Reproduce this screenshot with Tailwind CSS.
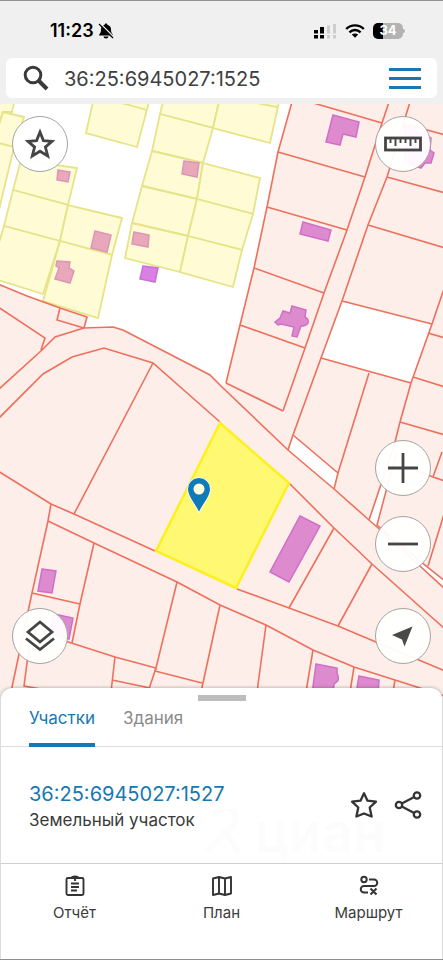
<!DOCTYPE html>
<html lang="ru">
<head>
    <meta charset="UTF-8">
    <meta name="viewport" content="width=device-width, initial-scale=1.0">
    <title>Карта участков</title>
    <script src="https://cdn.jsdelivr.net/npm/@tailwindcss/browser@4"></script>
</head>
<body class="bg-white font-['Inter',sans-serif] text-[#3b3b3b]">
    <div class="flex flex-col min-h-screen border-y border-[#939393]">

        <!-- Status bar and search -->
        <header class="bg-[#f0f0f0] px-1.5 pb-1.5">
            <div class="flex items-center justify-between h-[57px] pl-11 pr-8 pt-0.5 text-black">
                <div class="flex items-center gap-1">
                    <span class="text-lg font-semibold">11:23</span>
                    <svg class="w-4 h-4" viewBox="0 0 16 16" fill="currentColor">
                        <path d="M8 0.500c.8 0 1.300.5 1.400 1.200C11.800 2.300 13 4 13 6.200c0 3 .6 4 1.800 5.300v1H1.200v-1C2.400 10.200 3 9.200 3 6.200c0-2.200 1.200-3.900 3.600-4.500C6.700 1 7.200.5 8 .5zM5.500 13.500h5c-.2 1.300-1 2-2.500 2s-2.300-.7-2.500-2z"/>
                        <path d="M2.300 0.500L16 14.200" stroke="#f0f0f0" stroke-width="1.400"/>
                        <path d="M1 1L15 15" stroke="currentColor" stroke-width="1.200"/>
                    </svg>
                </div>
                <div class="flex items-center gap-2">
                    <svg class="w-6 h-4" viewBox="0 0 24 16">
                        <path d="M1 7h4v3.500H1zM7 4h4v6.500H7zM1 12h4v3.500H1zM7 12h4v3.500H7z"/>
                        <path d="M14 2.500h3v8h-3zM20 1h3v9.500h-3zM14 12h3v3.500h-3zM20 12h3v3.500h-3z" fill="#cdcdcd"/>
                    </svg>
                    <svg class="w-5 h-4" viewBox="0 0 20 16" fill="none" stroke="currentColor" stroke-width="2.400">
                        <path d="M1.200 6C6 1.200 14 1.200 18.800 6M4.400 9.300c3.200-3 8-3 11.200 0"/>
                        <path d="M10 14.800L6.800 11.600c1.800-1.500 4.600-1.500 6.400 0z" fill="currentColor" stroke="none"/>
                    </svg>
                    <div class="flex items-center">
                        <span class="flex items-center justify-center w-[30px] h-4 rounded-[5px] bg-linear-to-r from-black from-33% to-[#b3b3b3] to-33% text-white text-[13px] font-bold">34</span>
                        <span class="w-0.5 h-1 rounded-r bg-[#b3b3b3]"></span>
                    </div>
                </div>
            </div>
            <form class="flex items-center h-10 rounded-md bg-white pl-4 pr-4">
                <label for="search" aria-label="Поиск">
                    <svg class="w-7 h-7" viewBox="0 0 28 28" fill="none" stroke="#3a3a3a">
                        <circle cx="11" cy="11" r="7.800" stroke-width="3"/>
                        <path d="M16.500 16.500L25 25" stroke-width="4"/>
                    </svg>
                </label>
                <input id="search" type="text" value="36:25:6945027:1525" class="flex-1 min-w-0 ml-3.5 pt-0.5 text-xl text-[#404040] outline-none">
                <button type="button" aria-label="Меню" class="flex flex-col gap-1.5 w-8">
                    <span class="h-[3px] w-full bg-[#1778b2]"></span>
                    <span class="h-[3px] w-full bg-[#1778b2]"></span>
                    <span class="h-[3px] w-full bg-[#1778b2]"></span>
                </button>
            </form>
        </header>

        <!-- Map -->
        <main class="relative flex-1 overflow-hidden">
            <svg class="absolute inset-0 w-full h-full" viewBox="0 104 443 596" preserveAspectRatio="xMidYMin slice">
                <!-- garden plots -->
                <g fill="#fefbd5" stroke="#e6e388" stroke-width="1.800">
                    <path d="M-2 103H14L12 112L3 112L-2 126z"/>
                    <path d="M3 112L24 117L14 147L-2 143V128z"/>
                    <path d="M-2 143L14 147L-2 214z"/>
                    <path d="M21 160L77 168L68 205L13 190z"/>
                    <path d="M13 190L68 205L60 241L4 226z"/>
                    <path d="M68 205L122 218L112 255L60 241z"/>
                    <path d="M4 226L60 241L43 294L-2 280V246z"/>
                    <path d="M60 241L112 255L98 318L43 301z"/>
                    <path d="M93 102H149L137 147L86 133zM118 102L147 110"/>
                    <path d="M163 102H219L213 128L160 114z"/>
                    <path d="M160 114L213 128L203 163L152 151z"/>
                    <path d="M219 102H279L270 143L213 128zM252 102L277 107"/>
                    <path d="M152 151L203 163L197 199L142 186z"/>
                    <path d="M142 186L197 199L188 236L132 223z"/>
                    <path d="M132 223L188 236L180 272L125 258z"/>
                    <path d="M203 163L260 178L253 214L197 199z"/>
                    <path d="M197 199L253 214L242 250L188 236z"/>
                    <path d="M188 236L242 250L233 287L180 272z"/>
                </g>
                <g fill="#e8a8ba" stroke="#de94b8" stroke-width="1.500">
                    <path d="M58 170L70 172L68 182L57 180z"/>
                    <path d="M184 161L199 163L197 177L182 174z"/>
                    <path d="M134 232L149 235L148 247L132 244z"/>
                    <path d="M95 231L111 235L107 252L91 248z"/>
                    <path d="M57 261L70 262L69 268L74 271L70 283L55 279L59 268L56 266z"/>
                </g>
                <path d="M143 266L158 268L155 282L140 279z" fill="#da80e2" stroke="#c96fdb" stroke-width="1.500"/>

                <!-- built-up land with unassigned gaps -->
                <path fill="#fdeeea" d="M-2 284L27 296L43 302L60 308L87 317L84 328L113 327L123 330L210 375L222 387L226 383L240 325L254 268L267 207L278 152L292 102H445V702H-2z"/>
                <g fill="#fff">
                    <path d="M342 301L432 324L411 383L321 358z"/>
                    <path d="M293 435L338 473L334 489L288 450z"/>
                    <path d="M394 446L369 520L377 526L390 482z"/>
                    <path d="M377 524L421 562L445 581V589L418 567z"/>
                </g>
                <g fill="none" stroke="#ee705c" stroke-width="1.600">
                    <path d="M-2 284L27 296L60 308L87 317L84 328L113 327L123 330L210 375L222 387L288 450L334 489L369 520L377 527L445 589"/>
                    <path d="M60 308L57 320L84 328M226 383L240 325L254 268L267 207L278 152L292 102"/>
                    <path d="M-2 390L42 350L55 337L84 328M-2 307L45 338L41 350"/>
                    <path d="M-2 419L43 374L72 357L104 348L153 363L220 422M289 483L334 528L372 564L445 629"/>
                    <path d="M153 363L74 514M-2 471L51 504L74 514L155 551M237 589L289 608L338 626L376 642L445 671"/>
                    <path d="M334 528L289 608M372 564L338 626"/>
                    <path d="M310 102L382 123M278 152L365 177M267 207L347 230M254 268L324 293M240 325L305 348M226 383L283 411"/>
                    <path d="M389 102L382 123L365 177L347 230L324 293L305 348L283 411"/>
                    <path d="M410 102L387 177L368 225L342 301L321 358L293 435L288 450"/>
                    <path d="M402 123L445 135M387 177L445 193M368 225L445 248M342 301L432 324M321 358L411 383"/>
                    <path d="M445 286L432 324L411 383L400 422L394 446L369 520M396 454L377 525L421 562L445 581"/>
                    <path d="M428 333L445 338M413 377L445 387M400 422L445 435M369 373L338 473L334 489M293 435L338 473"/>
                    <path d="M442 452L433 477L445 481M433 477L415 470M445 511L428 566"/>
                    <path d="M51 504L48 521L32 593L11 692M30 640L24 686L58 692"/>
                    <path d="M48 521L94 543L177 582L220 605L266 625L313 650L354 667L395 680L445 696"/>
                    <path d="M94 543L80 604L72 643M32 593L80 604M62 640L115 657L156 668L155 671L202 683"/>
                    <path d="M177 582L156 668L148 692M115 657L111 692M112 680L150 688M220 605L201 692"/>
                    <path d="M266 625L257 692M313 650L306 692M354 667L350 692M395 680L393 692"/>
                </g>

                <!-- buildings -->
                <g fill="#de8ace" stroke="#d06fc6" stroke-width="1.500">
                    <path d="M333 115L359 122L356 137L343 134L340 145L326 142z"/>
                    <path d="M303 222L331 230L328 241L300 234z"/>
                    <path d="M292 306L306 310L305 317Q309 319 308 323Q306 326 301 326L297 337L292 336L294 327L281 324L278 325L275 322L280 318L283 311L290 313z"/>
                    <path d="M404 125L431 138L430 150L434 153L431 163L425 163L421 168L405 162z"/>
                    <path d="M42 569L56 571L52 593L38 591z"/>
                    <path d="M54 614L73 618L69 639L50 634z"/>
                    <path d="M300 516L320 526L289 582L270 572z"/>
                    <path d="M316 664L337 668L337 673Q341 680 334 684L333 694H312z"/>
                    <path d="M359 676L379 680L378 694H356z"/>
                </g>

                <!-- selected plot -->
                <path d="M220 423L289 483L236 588L156 551z" fill="#fef873" stroke="#fcf01f" stroke-width="2.500"/>
                <path d="M199 513C196 505 187.500 497 187.500 489A11.500 11.500 0 0 1 210.500 489C210.500 497 202 505 199 513z" fill="#0f7ab8" stroke="#fff" stroke-width="1"/>
                <circle cx="199" cy="489" r="5.500" fill="#fffde0"/>
            </svg>

            <button type="button" aria-label="Избранное" class="absolute top-3 left-3 flex items-center justify-center size-14 rounded-full border border-[#a3a3a3] bg-white/95">
                <svg class="w-8 h-8" viewBox="0 0 32 32" fill="none" stroke="#454545" stroke-width="2.800"><path d="M16 4L19.400 12.600L28 13.300L21.400 19.100L23.700 28L16 23.200L8.300 28L10.600 19.100L4 13.300L12.600 12.600z"/></svg>
            </button>
            <button type="button" aria-label="Линейка" class="absolute top-3 right-3 flex items-center justify-center size-14 rounded-full border border-[#a3a3a3] bg-white/95">
                <svg class="w-10 h-4" viewBox="0 0 40 16" fill="none" stroke="#454545" stroke-width="2"><rect x="2.500" y="2" width="35" height="12" stroke-width="2.800"/><path d="M7.500 3v4M12.500 3v7M17.500 3v4M22.500 3v4M27.500 3v7M32.500 3v4" stroke-width="1.900"/></svg>
            </button>
            <button type="button" aria-label="Слои" class="absolute bottom-9 left-3 flex items-center justify-center size-14 rounded-full border border-[#a3a3a3] bg-white/95">
                <svg class="w-8 h-8" viewBox="0 0 32 32" fill="none" stroke="#454545" stroke-width="2.800"><path d="M16 2L28 12L16 22L4 12z"/><path d="M2 18.500L16 29.500L30 18.500"/></svg>
            </button>
            <div class="absolute bottom-9 right-3 flex flex-col">
                <button type="button" aria-label="Приблизить" class="flex items-center justify-center size-14 mb-5 rounded-full border border-[#a3a3a3] bg-white/95">
                    <svg class="w-8 h-8" viewBox="0 0 32 32" stroke="#454545" stroke-width="2.800"><path d="M16 1v30M1 16h30"/></svg>
                </button>
                <button type="button" aria-label="Отдалить" class="flex items-center justify-center size-14 mb-9 rounded-full border border-[#a3a3a3] bg-white/95">
                    <svg class="w-8 h-8" viewBox="0 0 32 32" stroke="#454545" stroke-width="2.800"><path d="M1 16h30"/></svg>
                </button>
                <button type="button" aria-label="Моё местоположение" class="flex items-center justify-center size-14 rounded-full border border-[#a3a3a3] bg-white/95">
                    <svg class="w-6 h-6" viewBox="0 0 24 24" fill="#4a4a4a"><path d="M21.500 2.500L13.500 22.500L11 15.500L1 11z"/></svg>
                </button>
            </div>
        </main>

        <!-- Results sheet -->
        <section class="relative -mt-3 rounded-t-xl border-x border-[#dcdcdc] bg-white shadow-[0_-1px_3px_rgba(0,0,0,0.2)]">
            <div class="absolute top-[7px] inset-x-0 flex justify-center">
                <span class="w-12 h-1.5 bg-[#bdbdbd]"></span>
            </div>
            <nav class="flex gap-7 h-[59px] px-7 border-b border-[#dcdcdc] text-[17px]">
                <a href="#plots" class="flex items-center -mb-px pt-1.5 border-b-4 border-[#1778b2] text-[#1778b2]">Участки</a>
                <a href="#buildings" class="flex items-center -mb-px pt-1.5 border-b-4 border-transparent text-[#8a8a8a]">Здания</a>
            </nav>
            <div class="relative flex items-center justify-between h-[117px] pl-7 pr-5 border-b border-[#cfcfcf]">
                <div class="absolute right-14 bottom-0 flex items-center gap-3 text-[#fcfcfc] select-none" aria-hidden="true">
                    <svg class="w-10 h-12" viewBox="0 0 40 48" fill="none" stroke="currentColor" stroke-width="6"><path d="M12 6A9 9 0 0 1 32 12Q31 20 22 22L36 44M22 24L4 42"/></svg>
                    <span class="text-[54px] leading-[60px] font-semibold">циан</span>
                </div>
                <div class="relative pt-0.5">
                    <a href="#plot" class="block text-xl leading-7 text-[#1778b2]">36:25:6945027:1527</a>
                    <p class="text-[17px] leading-6">Земельный участок</p>
                </div>
                <div class="relative flex gap-4">
                    <button type="button" aria-label="В избранное">
                        <svg class="w-7 h-7" viewBox="0 0 28 28" fill="none" stroke="#333" stroke-width="2.300" stroke-linejoin="round"><path d="M14 2.200L17.500 9.700L26 10.700L19.700 16.500L21.600 25.500L14 22.500L6.400 25.500L8.300 16.500L2 10.700L10.500 9.700z"/></svg>
                    </button>
                    <button type="button" aria-label="Поделиться">
                        <svg class="w-7 h-7" viewBox="0 0 28 28" fill="none" stroke="#333" stroke-width="2.300"><circle cx="5" cy="14" r="3.200"/><circle cx="23" cy="4.500" r="3.200"/><circle cx="23" cy="23.500" r="3.200"/><path d="M7.800 12.500L20.200 6M7.800 15.500L20.200 22"/></svg>
                    </button>
                </div>
            </div>
            <div class="grid grid-cols-3 h-[95px] pt-2.5 text-[15px] leading-5">
                <button type="button" class="flex flex-col items-center gap-[5px]">
                    <svg class="w-6 h-6" viewBox="0 0 24 24" fill="none" stroke="#333" stroke-width="1.900"><rect x="3.500" y="4" width="17" height="17" rx="1.500"/><path d="M8.500 4.500C9 2 15 2 15.500 4.500" stroke-width="2.400"/><path d="M12 5v2M8 9.500h8M8 13h8M8 16.500h6"/></svg>
                    Отчёт
                </button>
                <button type="button" class="flex flex-col items-center gap-[5px]">
                    <svg class="w-6 h-6" viewBox="0 0 24 24" fill="none" stroke="#333" stroke-width="1.900" stroke-linejoin="round"><path d="M3 4.500L9 3L15 4.500L21 3V19.500L15 21L9 19.500L3 21zM9 3v16.500M15 4.500V21"/></svg>
                    План
                </button>
                <button type="button" class="flex flex-col items-center gap-[5px]">
                    <svg class="w-6 h-6" viewBox="0 0 24 24" fill="none" stroke="#333" stroke-width="2"><circle cx="7" cy="5.500" r="2.700"/><path d="M12 5.500h5a3.200 3.200 0 0 1 0 6.500H7a3.200 3.200 0 0 0 0 6.500h4M13.500 14.500l6 6M19.500 14.500l-6 6"/></svg>
                    Маршрут
                </button>
            </div>
        </section>
    </div>
</body>
</html>
